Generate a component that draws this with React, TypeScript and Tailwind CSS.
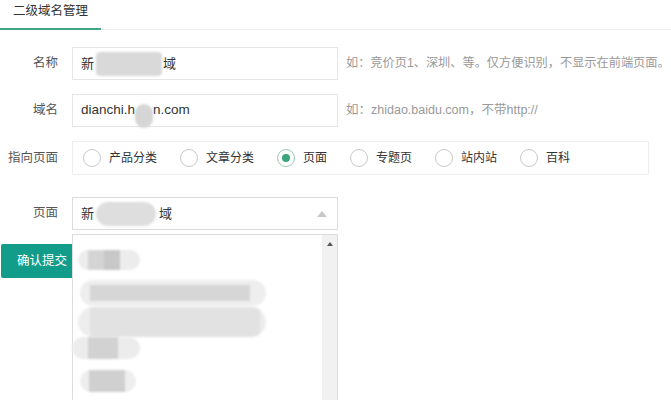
import React from "react";

const font = { fontFamily: '"Liberation Sans", "Noto Sans CJK SC", sans-serif' };

function Radio({ label, checked }: { label: string; checked?: boolean }) {
  return (
    <div className="flex items-center gap-[8px]">
      <span
        className={
          "flex h-[18px] w-[18px] items-center justify-center rounded-full border " +
          (checked ? "border-[#9bc9b3]" : "border-[#c9c9c9]")
        }
      >
        {checked && <span className="h-[8px] w-[8px] rounded-full bg-[#3aa57a]" />}
      </span>
      <span className="text-[12px] text-[#333]">{label}</span>
    </div>
  );
}

export default function App() {
  return (
    <div className="relative h-[400px] w-[671px] overflow-hidden bg-white" style={font}>
      {/* tab header */}
      <div className="relative h-[30px] border-b border-[#eeeeee]">
        <div className="absolute left-0 top-0 flex h-[30px] w-[101px] items-start justify-center border-b-2 border-[#3fa883] pt-[2px] text-[12.5px] text-[#333]">
          二级域名管理
        </div>
      </div>

      <div className="flex flex-col">
        {/* row 1 */}
        <div className="mt-[17px] flex items-center">
          <div className="w-[58px] shrink-0 text-right text-[12.5px] text-[#555]">名称</div>
          <div className="ml-[14px] flex h-[33px] w-[266px] shrink-0 items-center border border-[#e6e6e6] pl-[8px] text-[13px] text-[#333]">
            <span>新</span>
            <span className="ml-[2px] inline-block h-[24px] w-[66px] rounded-[4px] bg-[#d9d9d9] blur-[1px]" />
            <span className="ml-[1px]">域</span>
          </div>
          <div className="ml-[8px] whitespace-nowrap text-[12.2px] text-[#999]">如：竞价页1、深圳、等。仅方便识别，不显示在前端页面。</div>
        </div>

        {/* row 2 */}
        <div className="mt-[14px] flex items-center">
          <div className="w-[58px] shrink-0 text-right text-[12.5px] text-[#555]">域名</div>
          <div className="ml-[14px] flex h-[33px] w-[266px] shrink-0 items-center border border-[#e6e6e6] pl-[8px] text-[13.5px] text-[#333]">
            <span>dianchi.h</span>
            <span className="mt-[10px] inline-block h-[24px] w-[18px] rounded-full bg-[#d6d6d6] blur-[1px]" />
            <span>n.com</span>
          </div>
          <div className="ml-[8px] whitespace-nowrap text-[12.5px] text-[#999]">如：zhidao.baidu.com，不带http://</div>
        </div>

        {/* row 3 */}
        <div className="mt-[14px] flex items-center">
          <div className="w-[58px] shrink-0 text-right text-[12.5px] text-[#555]">指向页面</div>
          <div className="ml-[14px] flex h-[34px] w-[577px] shrink-0 items-center gap-[23px] border border-[#eeeeee] pl-[10px]">
            <Radio label="产品分类" />
            <Radio label="文章分类" />
            <Radio label="页面" checked />
            <Radio label="专题页" />
            <Radio label="站内站" />
            <Radio label="百科" />
          </div>
        </div>

        {/* row 4 */}
        <div className="mt-[22px] flex items-center">
          <div className="w-[58px] shrink-0 text-right text-[12.5px] text-[#555]">页面</div>
          <div className="ml-[14px] flex h-[33px] w-[266px] shrink-0 items-center border border-[#dcdcdc] pl-[8px] pr-[10px] text-[13px] text-[#333]">
            <span>新</span>
            <span className="ml-[2px] inline-block h-[24px] w-[60px] rounded-full bg-[#dedede] blur-[1px]" />
            <span className="ml-[3px]">域</span>
            <span className="ml-auto h-0 w-0 border-x-[5px] border-b-[6px] border-x-transparent border-b-[#c8c8c8]" />
          </div>
        </div>

        {/* button */}
        <div className="mt-[14px] flex">
          <button className="ml-[1px] h-[34px] w-[90px] rounded-[2px] bg-[#129c8a] pl-[16px] text-left text-[12.5px] text-white">
            确认提交
          </button>
        </div>
      </div>

      {/* dropdown */}
      <div className="absolute left-[72px] top-[234px] flex h-[180px] w-[266px] border border-[#dcdcdc] bg-white">
        <div className="relative flex-1">
          <div className="absolute left-[5px] top-[15px] flex h-[20px] w-[62px] overflow-hidden rounded-full bg-[#ececec] blur-[1px]">
            <span className="ml-[10px] h-full w-[16px] bg-[#d4d4d4]" />
            <span className="h-full w-[16px] bg-[#c8c8c8]" />
          </div>
          <div className="absolute left-[7px] top-[45px] flex h-[26px] w-[186px] overflow-hidden rounded-full bg-[#eeeeee] blur-[1px]">
            <span className="ml-[10px] mt-[5px] h-[16px] w-[160px] bg-[#d6d6d6]" />
          </div>
          <div className="absolute left-[5px] top-[72px] flex h-[30px] w-[188px] overflow-hidden rounded-full bg-[#ededed] blur-[1px]">
            <span className="ml-[12px] h-full w-[170px] bg-[#e2e2e2]" />
          </div>
          <div className="absolute left-[-1px] top-[102px] flex h-[22px] w-[68px] overflow-hidden rounded-full bg-[#ececec] blur-[1px]">
            <span className="ml-[16px] h-full w-[30px] bg-[#d2d2d2]" />
          </div>
          <div className="absolute left-[7px] top-[135px] flex h-[22px] w-[56px] overflow-hidden rounded-full bg-[#eeeeee] blur-[1px]">
            <span className="ml-[9px] h-full w-[36px] bg-[#d0d0d0]" />
          </div>
        </div>
        <div className="flex w-[15px] flex-col items-center bg-[#f1f1f1] pt-[7px]">
          <span className="h-0 w-0 border-x-[3px] border-b-[4px] border-x-transparent border-b-[#555]" />
        </div>
      </div>
    </div>
  );
}
